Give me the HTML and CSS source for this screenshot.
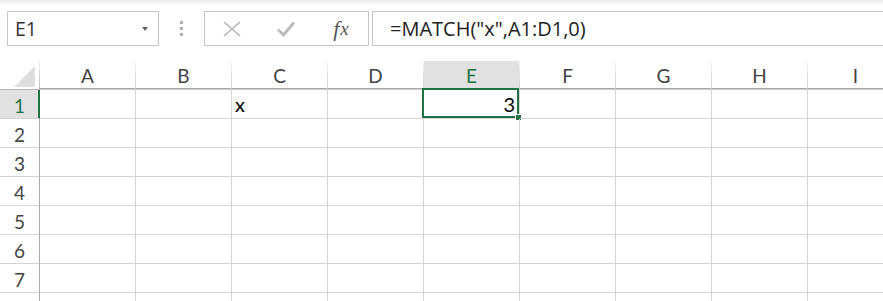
FILE: index.html
```html
<!DOCTYPE html>
<html>
<head>
<meta charset="utf-8">
<link rel="stylesheet" href="styles.css">
</head>
<body>
<div class="app">
  <div class="fbar">
    <div class="namebox">
      <span class="name">E1</span>
      <span class="caret"></span>
    </div>
    <div class="grip"><i></i><i></i><i></i></div>
    <div class="btns">
      <span class="btn">
        <svg width="20" height="18" viewBox="0 0 20 18"><path d="M2 2 L18 16 M18 2 L2 16" stroke="#b4b4b4" stroke-width="1.6" fill="none"/></svg>
      </span>
      <span class="btn">
        <svg width="20" height="18" viewBox="0 0 20 18"><path d="M2 9.5 L7.5 15 L18 2.5" stroke="#bcbcbc" stroke-width="3" fill="none" stroke-linejoin="miter"/></svg>
      </span>
      <span class="btn fx"><span class="f">f</span><span class="x">x</span></span>
    </div>
    <div class="formula">=MATCH("x",A1:D1,0)</div>
  </div>
  <div class="sheet">
    <div class="corner"><svg width="40" height="28" viewBox="0 0 40 28"><polygon points="35,5 35,26 14,26" fill="#dedede"/></svg></div>
    <div class="ch">A</div><div class="ch">B</div><div class="ch">C</div><div class="ch">D</div><div class="ch sel">E</div><div class="ch">F</div><div class="ch">G</div><div class="ch">H</div><div class="ch">I</div>

    <div class="rh sel">1</div><div class="c"></div><div class="c"></div><div class="c">x</div><div class="c"></div><div class="c active num">3<span class="selbox"><span class="handle"></span></span></div><div class="c"></div><div class="c"></div><div class="c"></div><div class="c"></div>
    <div class="rh">2</div><div class="c"></div><div class="c"></div><div class="c"></div><div class="c"></div><div class="c"></div><div class="c"></div><div class="c"></div><div class="c"></div><div class="c"></div>
    <div class="rh">3</div><div class="c"></div><div class="c"></div><div class="c"></div><div class="c"></div><div class="c"></div><div class="c"></div><div class="c"></div><div class="c"></div><div class="c"></div>
    <div class="rh">4</div><div class="c"></div><div class="c"></div><div class="c"></div><div class="c"></div><div class="c"></div><div class="c"></div><div class="c"></div><div class="c"></div><div class="c"></div>
    <div class="rh">5</div><div class="c"></div><div class="c"></div><div class="c"></div><div class="c"></div><div class="c"></div><div class="c"></div><div class="c"></div><div class="c"></div><div class="c"></div>
    <div class="rh">6</div><div class="c"></div><div class="c"></div><div class="c"></div><div class="c"></div><div class="c"></div><div class="c"></div><div class="c"></div><div class="c"></div><div class="c"></div>
    <div class="rh">7</div><div class="c"></div><div class="c"></div><div class="c"></div><div class="c"></div><div class="c"></div><div class="c"></div><div class="c"></div><div class="c"></div><div class="c"></div>
    <div class="rh"></div><div class="c"></div><div class="c"></div><div class="c"></div><div class="c"></div><div class="c"></div><div class="c"></div><div class="c"></div><div class="c"></div><div class="c"></div>
  </div>
</div>
</body>
</html>
```
FILE: styles.css
```css
* { box-sizing: border-box; }
html, body { margin: 0; padding: 0; background: #fff; }
.app { width: 883px; height: 301px; overflow: hidden; font-family: "Open Sans", sans-serif; }

.fbar {
  height: 61px;
  display: flex;
  align-items: flex-start;
  padding: 11px 0 0 7px;
  background: linear-gradient(#ececec 0, #fafafa 4px, #fff 6px);
}
.namebox {
  width: 152px; height: 35px;
  border: 1px solid #c6c6c6;
  background: #fff;
  display: flex; align-items: center; justify-content: space-between;
  padding: 0 10px 0 7px;
}
.name { font-size: 19.5px; color: #333; line-height: 1; }
.caret {
  width: 0; height: 0;
  border-left: 3.5px solid transparent; border-right: 3.5px solid transparent;
  border-top: 4px solid #666;
  margin-top: 1px;
}
.grip {
  width: 45px; height: 35px;
  display: flex; flex-direction: column; align-items: center; justify-content: center; gap: 3px;
}
.grip i { display: block; width: 3px; height: 3px; background: #b0b0b0; }
.btns {
  width: 165px; height: 35px;
  border: 1px solid #c6c6c6;
  display: flex; align-items: center; padding-left: 0;
}
.btn { width: 54px; display: flex; justify-content: center; align-items: center; }
.fx { font-family: "Liberation Serif", serif; font-style: italic; color: #555; font-size: 21px; line-height: 1; padding-left: 2px; }
.fx .f { font-size: 22px; }
.fx .x { font-size: 19px; margin-left: 1px; }
.formula {
  flex: 1; height: 35px; margin-left: 3px; margin-right: -10px;
  border: 1px solid #c6c6c6;
  font-size: 20px; color: #222; line-height: 33px;
  padding-left: 17px;
}

.sheet {
  display: grid;
  grid-template-columns: 40px repeat(9, 96px);
  grid-auto-rows: 29px;
  font-family: Lato, sans-serif;
}
.corner {
  border-right: 1px solid;
  border-image: linear-gradient(#f4f4f4, #b8b8b8) 1;
  border-bottom: 1px solid #ababab;
}
.corner svg { display: block; }
.ch {
  border-right: 1px solid;
  border-bottom: 1px solid;
  border-image: linear-gradient(#f7f7f7, #cacaca) 1;
  box-shadow: inset 0 -1px 0 #ababab;
  color: #444; font-size: 19px;
  display: flex; align-items: flex-end; justify-content: center; padding-bottom: 2px;
}
.ch.sel { background: #e1e1e1; color: #217346; box-shadow: inset 0 -1px 0 #217346; }
.rh {
  border-right: 1px solid #ababab;
  border-bottom: 1px solid #d4d4d4;
  color: #444; font-size: 19px;
  display: flex; align-items: center; justify-content: center; padding-top: 2px;
}
.rh.sel { background: #e1e1e1; color: #217346; border-right-color: #217346; box-shadow: inset -1px 0 0 #217346; }
.c {
  border-right: 1px solid #d4d4d4;
  border-bottom: 1px solid #d4d4d4;
  font-size: 20px; color: #000;
  display: flex; align-items: flex-end; padding: 0 4px 2px 3px;
  position: relative;
}
.c.num { justify-content: flex-end; }
.selbox {
  position: absolute; left: -2px; top: -2px; right: 0; bottom: 0;
  border: 2px solid #217346;
}
.handle {
  position: absolute; right: -5px; bottom: -5px;
  width: 7px; height: 7px; background: #217346; border: 1px solid #fff;
}
```
